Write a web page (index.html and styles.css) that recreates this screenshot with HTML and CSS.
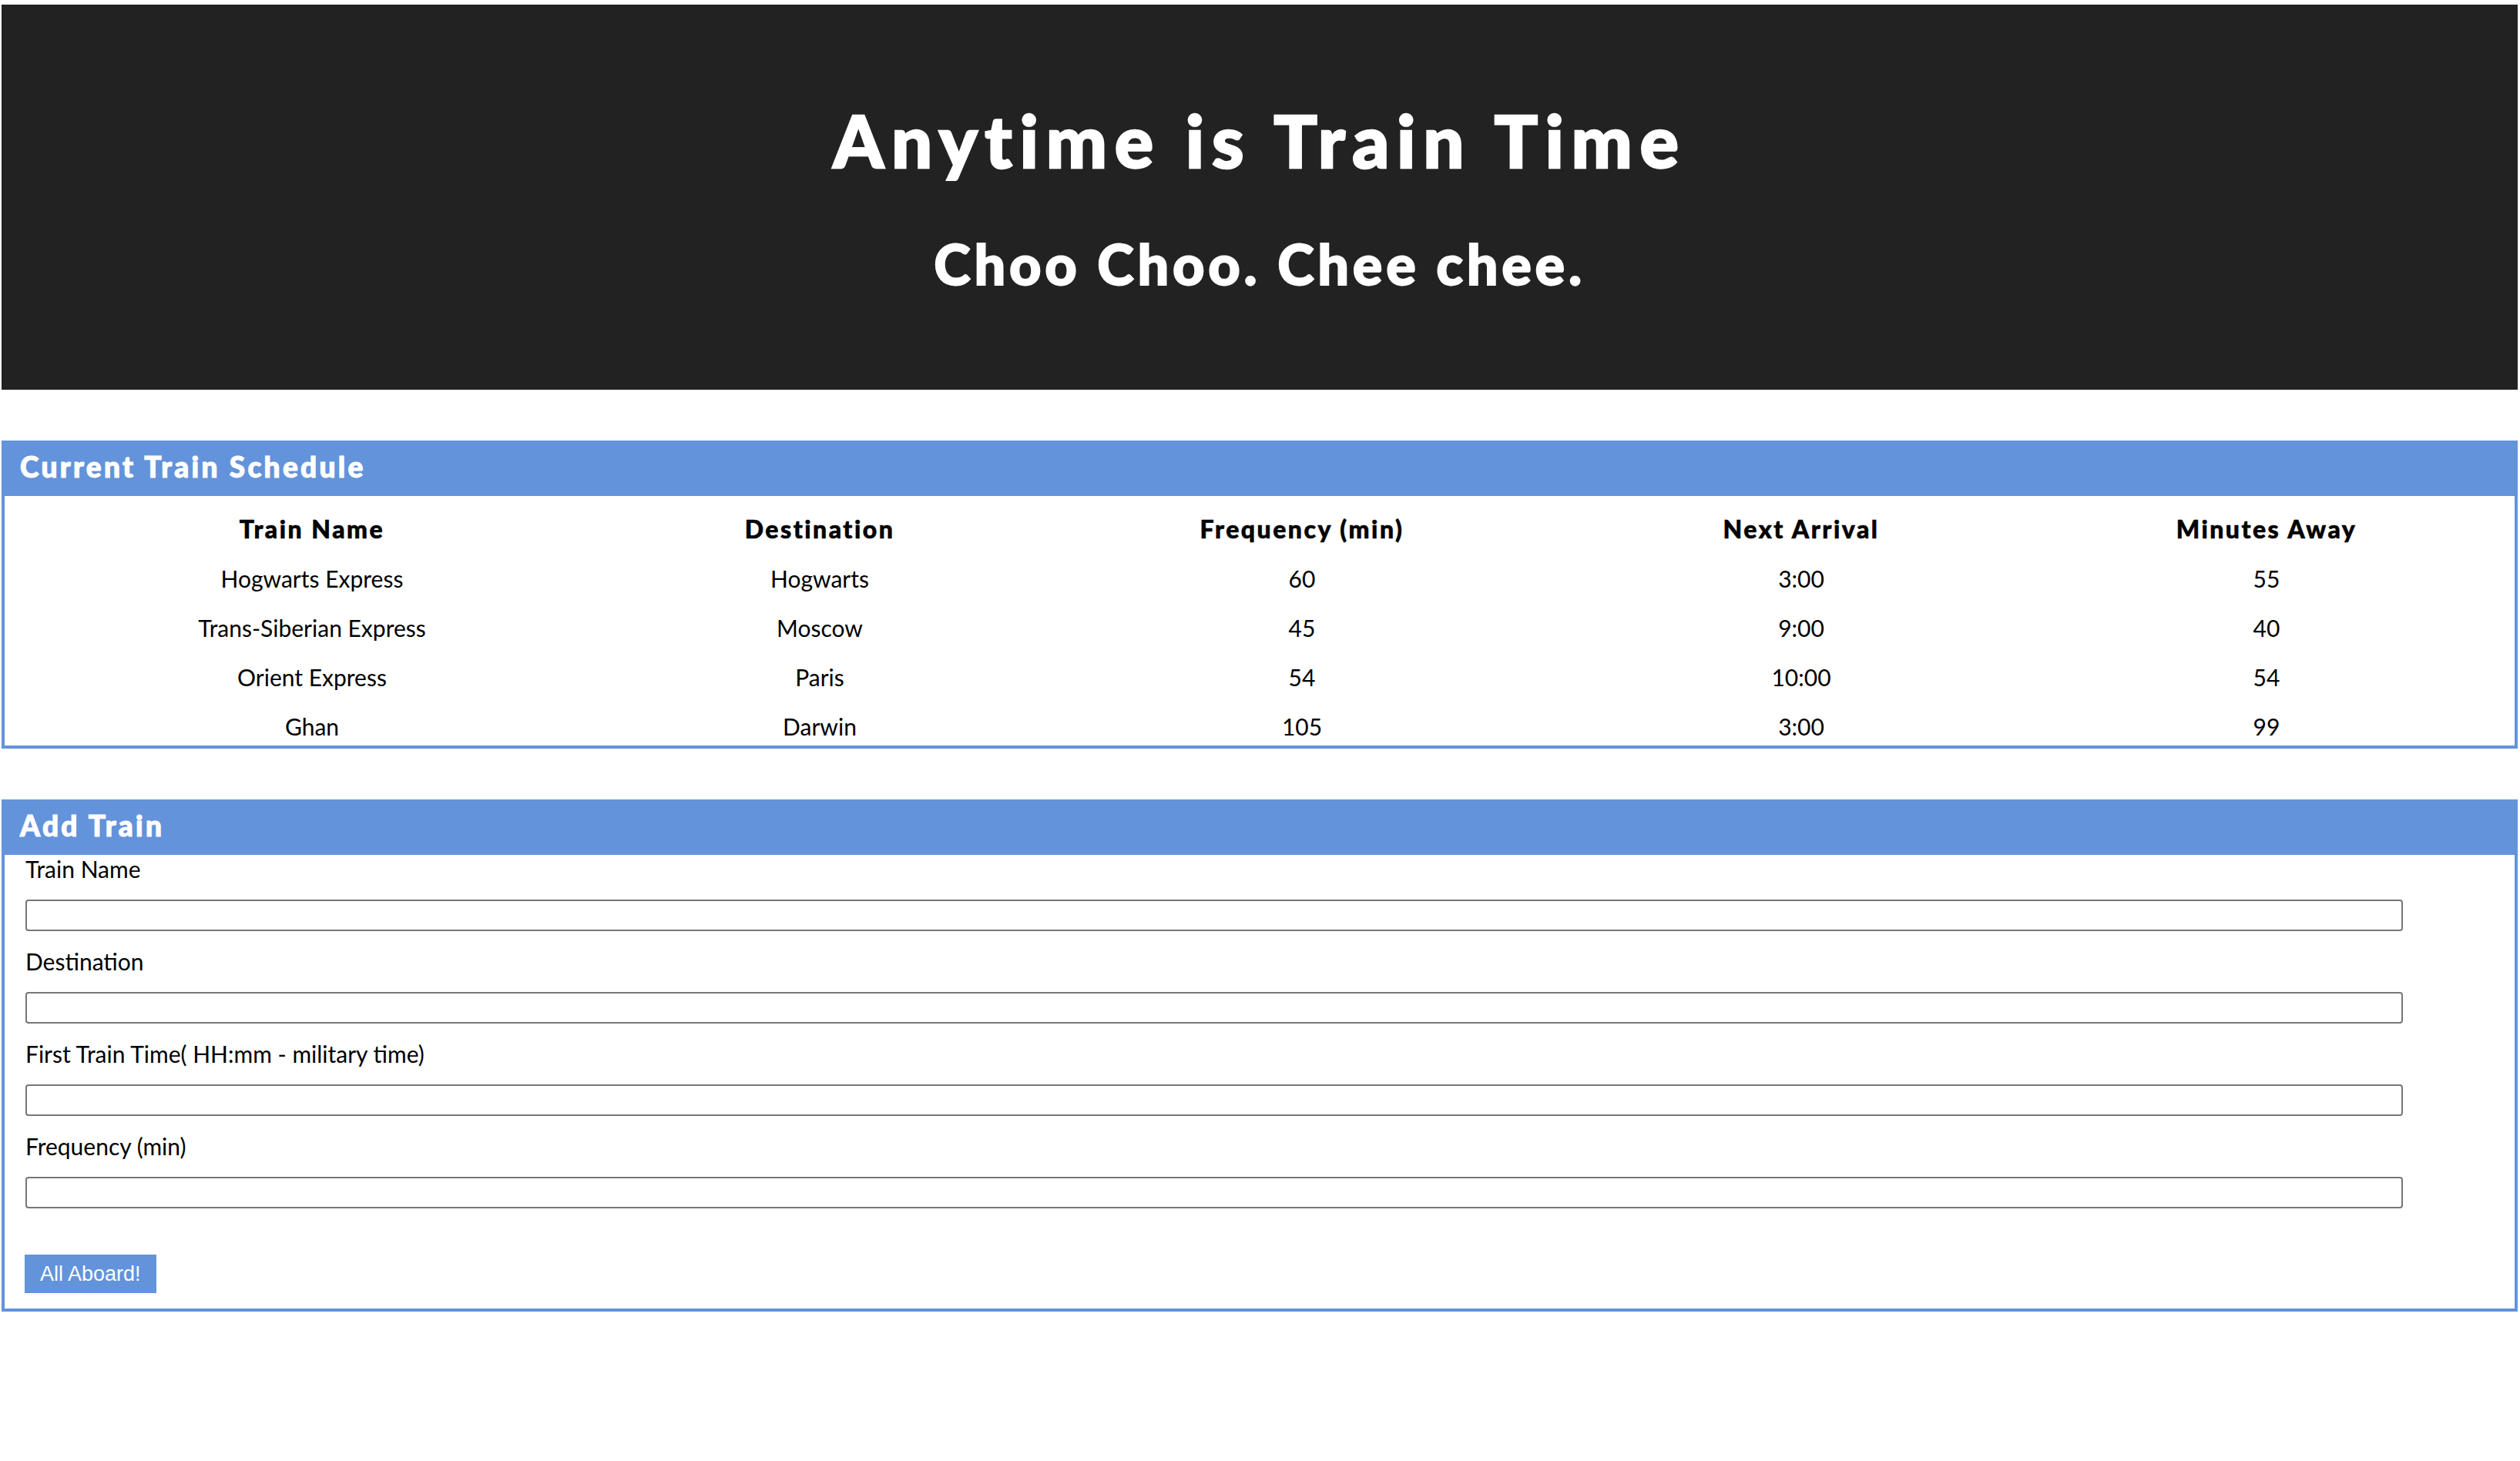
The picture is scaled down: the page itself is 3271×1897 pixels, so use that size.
FILE: index.html
```html
<!DOCTYPE html>
<html lang="en">
<head>
<meta charset="utf-8">
<title>Train Scheduler</title>
<link rel="stylesheet" href="styles.css">
</head>
<body>
  <header class="jumbotron">
    <h1 class="title">Anytime is Train Time</h1>
    <h2 class="subtitle">Choo Choo. Chee chee.</h2>
  </header>

  <section class="panel schedule">
    <div class="panel-heading">Current Train Schedule</div>
    <div class="panel-body">
      <table class="trains">
        <thead>
          <tr>
            <th class="c1">Train Name</th>
            <th class="c2">Destination</th>
            <th class="c3">Frequency (min)</th>
            <th class="c4">Next Arrival</th>
            <th class="c5">Minutes Away</th>
          </tr>
        </thead>
        <tbody>
          <tr><td>Hogwarts Express</td><td>Hogwarts</td><td>60</td><td>3:00</td><td>55</td></tr>
          <tr><td>Trans-Siberian Express</td><td>Moscow</td><td>45</td><td>9:00</td><td>40</td></tr>
          <tr><td>Orient Express</td><td>Paris</td><td>54</td><td>10:00</td><td>54</td></tr>
          <tr><td>Ghan</td><td>Darwin</td><td>105</td><td>3:00</td><td>99</td></tr>
        </tbody>
      </table>
    </div>
  </section>

  <section class="panel add">
    <div class="panel-heading">Add Train</div>
    <form class="panel-body form">
      <div class="field">
        <label for="name">Train Name</label>
        <input id="name" type="text">
      </div>
      <div class="field">
        <label for="dest">Destination</label>
        <input id="dest" type="text">
      </div>
      <div class="field">
        <label for="first">First Train Time( HH:mm - military time)</label>
        <input id="first" type="text">
      </div>
      <div class="field">
        <label for="freq">Frequency (min)</label>
        <input id="freq" type="text">
      </div>
      <button type="button" class="submit">All Aboard!</button>
    </form>
  </section>
</body>
</html>
```

FILE: styles.css
```css
html, body {
  margin: 0;
  background: #ffffff;
}

body {
  padding: 6px 3px 0 2px;
  font-family: Lato, "Open Sans", sans-serif;
  color: #000;
}

.jumbotron {
  background: #222222;
  height: 500px;
  box-sizing: border-box;
  padding-top: 130px;
  text-align: center;
  color: #fff;
}

.title {
  margin: 0 0 78px;
  font-size: 94px;
  line-height: 92px;
  font-weight: 900;
  letter-spacing: 9.7px;
  -webkit-text-stroke: 2.4px #fff;
}

.subtitle {
  margin: 0;
  font-size: 72px;
  line-height: 72px;
  font-weight: 900;
  letter-spacing: 4.7px;
  -webkit-text-stroke: 1.8px #fff;
}

.panel {
  margin-top: 66px;
  border: 4px solid #6393db;
  background: #fff;
}

.panel-heading {
  background: #6393db;
  color: #fff;
  box-sizing: border-box;
  margin: -4px -4px 0;
  height: 72px;
  padding: 4px 20px 8px 24px;
  font-size: 37px;
  line-height: 60px;
  font-weight: 900;
  letter-spacing: 3.3px;
  -webkit-text-stroke: 1.1px #fff;
}

.schedule .panel-body {
  padding-top: 6px;
}

.trains {
  width: 100%;
  border-collapse: collapse;
  table-layout: fixed;
}

.trains th,
.trains td {
  padding: 19px 0 9px;
  line-height: 36px;
  font-size: 30px;
  text-align: center;
  white-space: nowrap;
}

.trains tbody tr:last-child td {
  padding-bottom: 7px;
}

.trains th {
  font-size: 32px;
  font-weight: 900;
  letter-spacing: 2.5px;
  -webkit-text-stroke: 0.6px #000;
}

.trains .c1 { width: 798px; }
.trains .c2 { width: 520px; }
.trains .c3 { width: 732px; }
.trains .c4 { width: 564px; }
.trains .c5 { width: auto; }

.form {
  display: block;
  margin: 0;
  padding: 0 0 20px 27px;
}

.field {
  display: flex;
  flex-direction: column;
  align-items: flex-start;
  height: 120px;
}

.field label {
  font-size: 30px;
  line-height: 36px;
  height: 36px;
}

.field input {
  margin-top: 22px;
  width: 3086px;
  height: 41px;
  box-sizing: border-box;
  border: 2px solid #767676;
  border-radius: 4px;
  background: #fff;
  padding: 0 6px;
  font-size: 26px;
}

.submit {
  display: block;
  margin-top: 39px;
  margin-left: -1px;
  height: 50px;
  padding: 0 20px;
  border: none;
  background: #6393db;
  color: #fff;
  font-family: "Liberation Sans", Arial, sans-serif;
  font-size: 27px;
  line-height: 50px;
}
```
